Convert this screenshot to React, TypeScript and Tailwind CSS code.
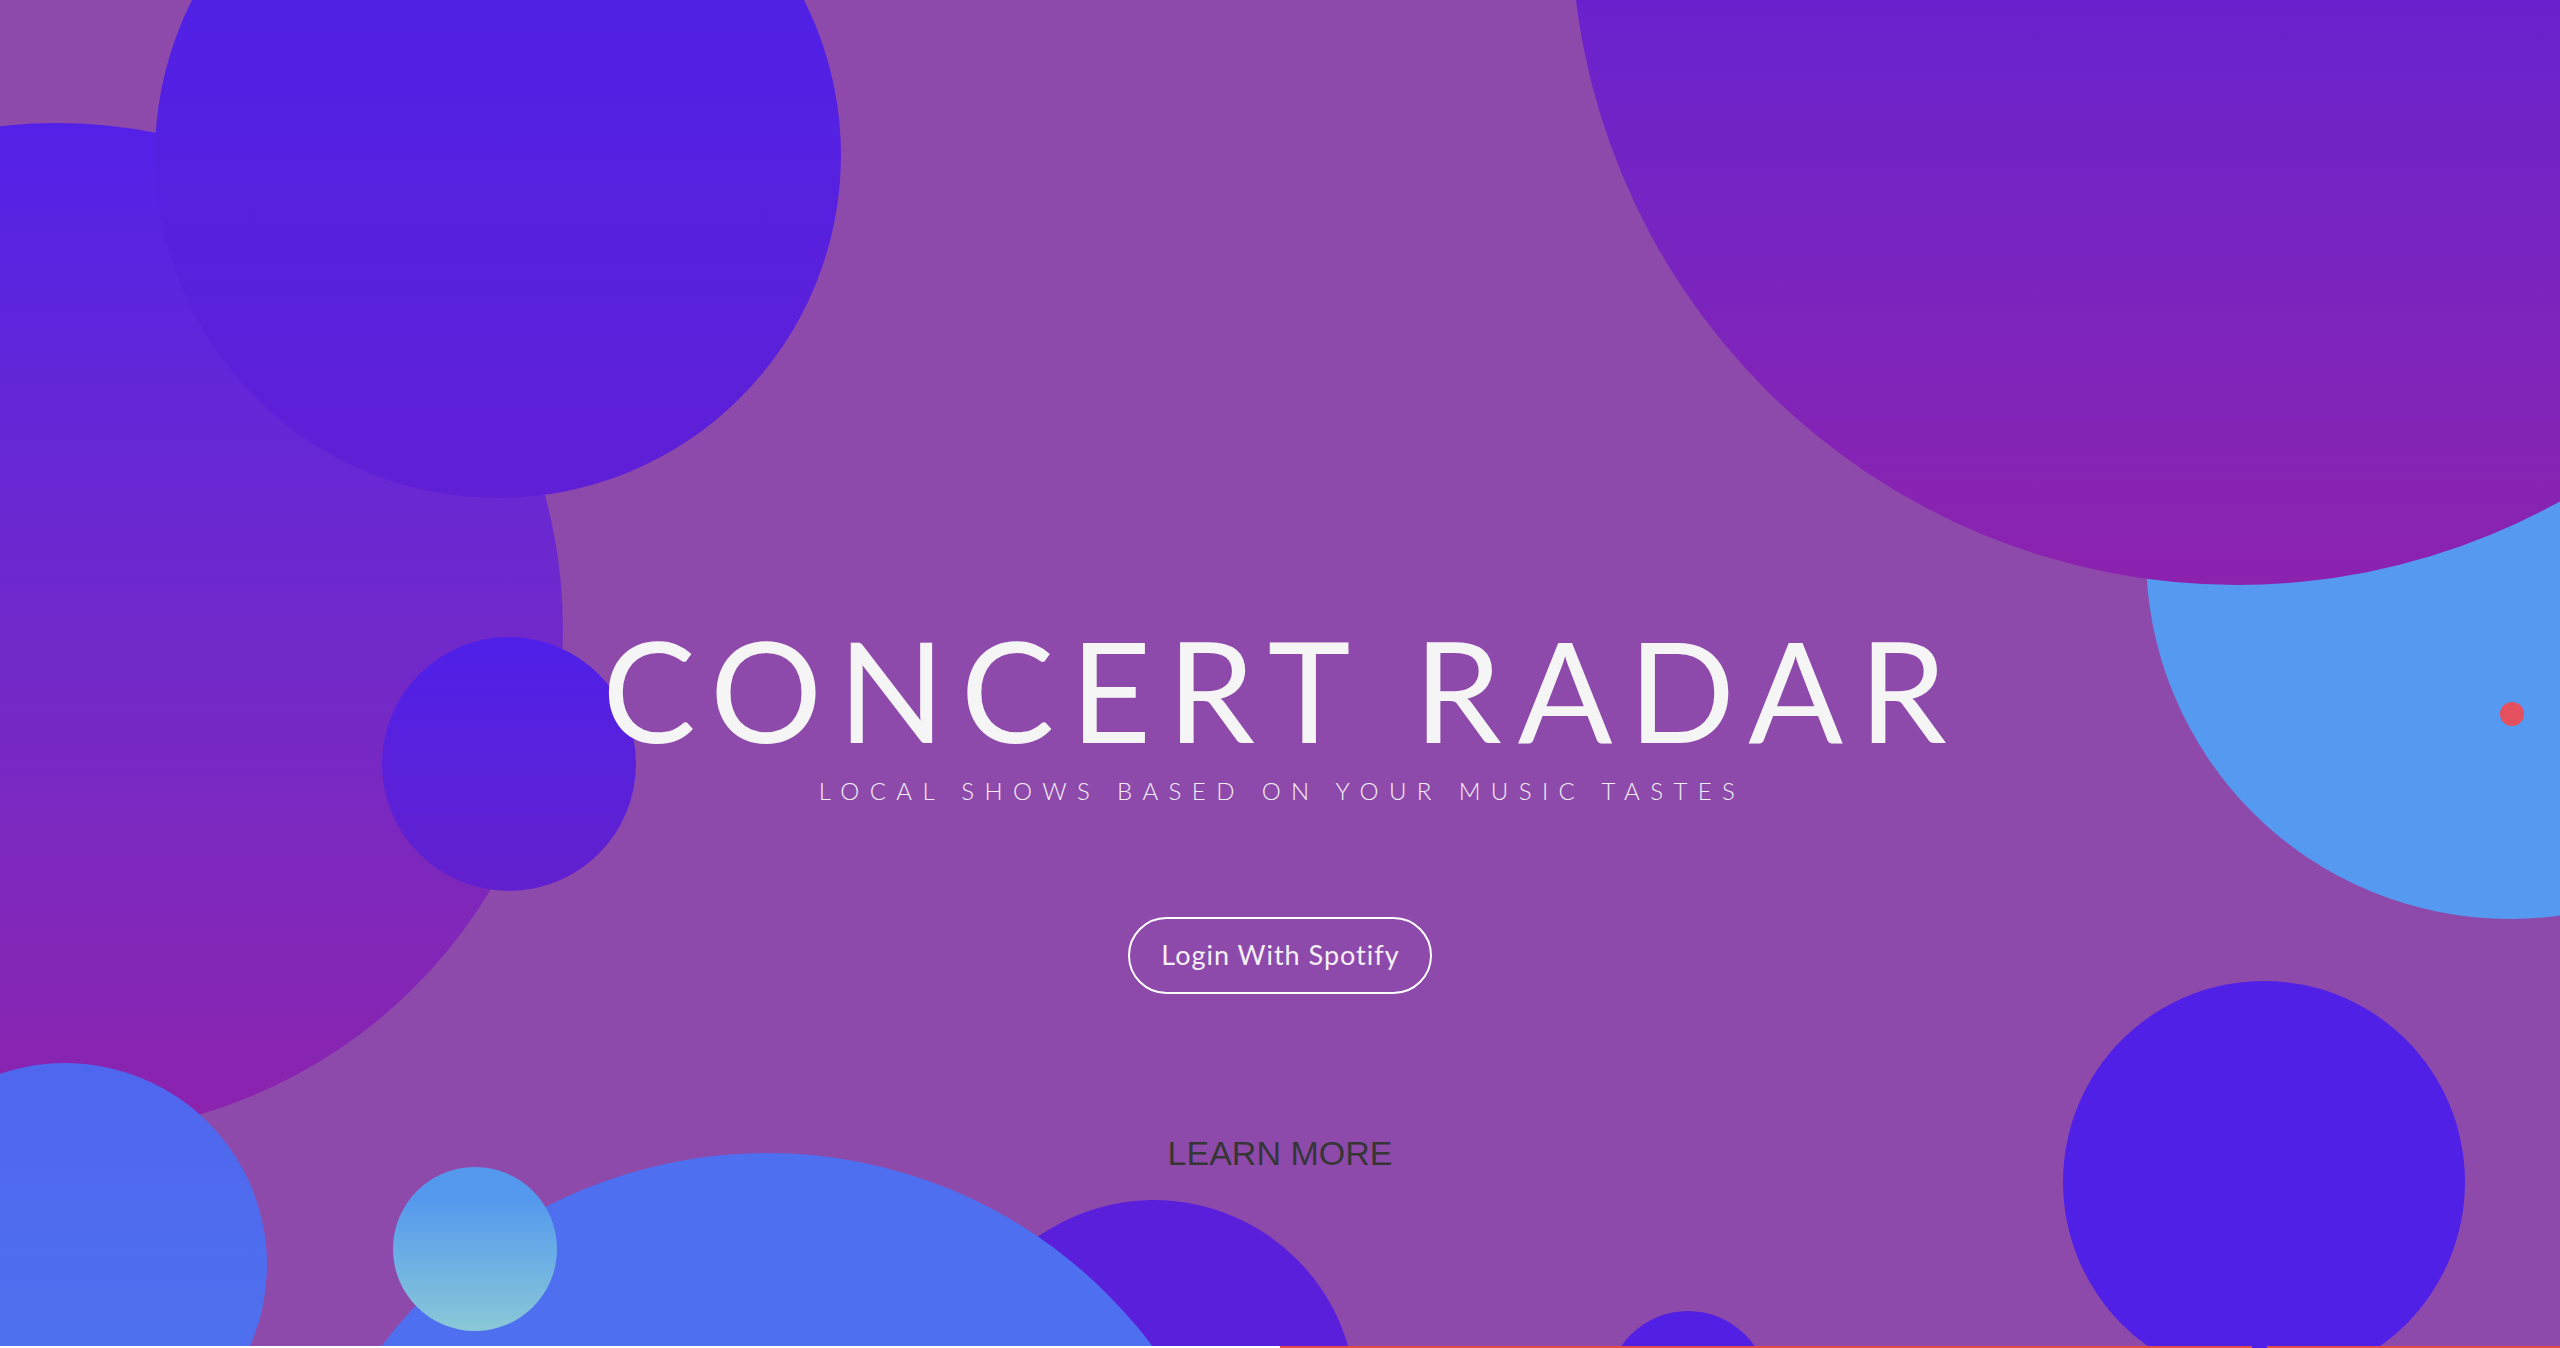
const Bubbles = () => {
    return (
        <div className="absolute inset-0">
            <div className="absolute left-[-449px] top-[123px] h-[1012px] w-[1012px] rounded-full bg-linear-to-b from-[#5320e8] to-[#8c22ad]" />
            <div className="absolute left-[155px] top-[-188px] h-[686px] w-[686px] rounded-full bg-linear-to-b from-[#4a20ec] to-[#5f1fd5]" />
            <div className="absolute left-[382px] top-[637px] h-[254px] w-[254px] rounded-full bg-linear-to-b from-[#4f1fe9] to-[#6220cd]" />
            <div className="absolute left-[-137px] top-[1063px] h-[404px] w-[404px] rounded-full bg-linear-to-b from-[#4f66ee] to-[#4e74ef]" />
            <div className="absolute left-[952px] top-[1200px] h-[404px] w-[404px] rounded-full bg-[#5a1fda]" />
            <div className="absolute left-[286px] top-[1153px] h-[962px] w-[962px] rounded-full bg-[#4e6ff0]" />
            <div className="absolute left-[393px] top-[1167px] h-[164px] w-[164px] rounded-full bg-linear-to-b from-[#5599ee] from-[20%] to-[#8ac8d6]" />
            <div className="absolute left-[1607px] top-[1311px] h-[162px] w-[162px] rounded-full bg-[#5120e4]" />
            <div className="absolute left-[2063px] top-[981px] h-[402px] w-[402px] rounded-full bg-[#5020e6]" />
            <div className="absolute left-[2146px] top-[191px] h-[728px] w-[728px] rounded-full bg-[#559af0]" />
            <div className="absolute left-[1571px] top-[-747px] h-[1332px] w-[1332px] rounded-full bg-linear-to-b from-[#6a21cd] from-[56%] to-[#8c22ae]" />
            <div className="absolute left-[2500px] top-[702px] h-[24px] w-[24px] rounded-full bg-[#e5505e]" />
        </div>
    )
}

export default function App() {
    return (
        <div className="w-[2560px] bg-white">
            <section className="relative h-[1346px] overflow-hidden bg-[#8e4aab]">
                <Bubbles />
                <div className="relative flex flex-col items-center pt-[619px]">
                    <h1 className="pl-[5px] text-[140px] font-normal leading-none tracking-[16px] text-[#f5f5f5] font-['Lato',sans-serif]">
                        CONCERT RADAR
                    </h1>
                    <p className="mt-[20px] pl-[4px] text-[24px] font-light leading-none tracking-[10.4px] text-[#f3eef6] font-['Lato',sans-serif]">
                        LOCAL SHOWS BASED ON YOUR MUSIC TASTES
                    </p>
                    <button className="mt-[114px] flex h-[77px] w-[304px] items-center justify-center rounded-full border-2 border-white pl-[1px] text-[27px] tracking-[1px] text-[#f5f0f7] font-['Lato',sans-serif]">
                        Login With Spotify
                    </button>
                    <a className="mt-[142px] text-[34px] leading-none text-[#363636] font-['Liberation_Sans',Arial,sans-serif]">
                        LEARN MORE
                    </a>
                </div>
            </section>
            <div className="flex h-[2px]">
                <div className="w-[1280px] bg-white" />
                <div className="w-[972px] bg-[#e34b4b]" />
                <div className="w-[15px] bg-[#5020e6]" />
                <div className="flex-1 bg-[#e34b4b]" />
            </div>
        </div>
    )
}
